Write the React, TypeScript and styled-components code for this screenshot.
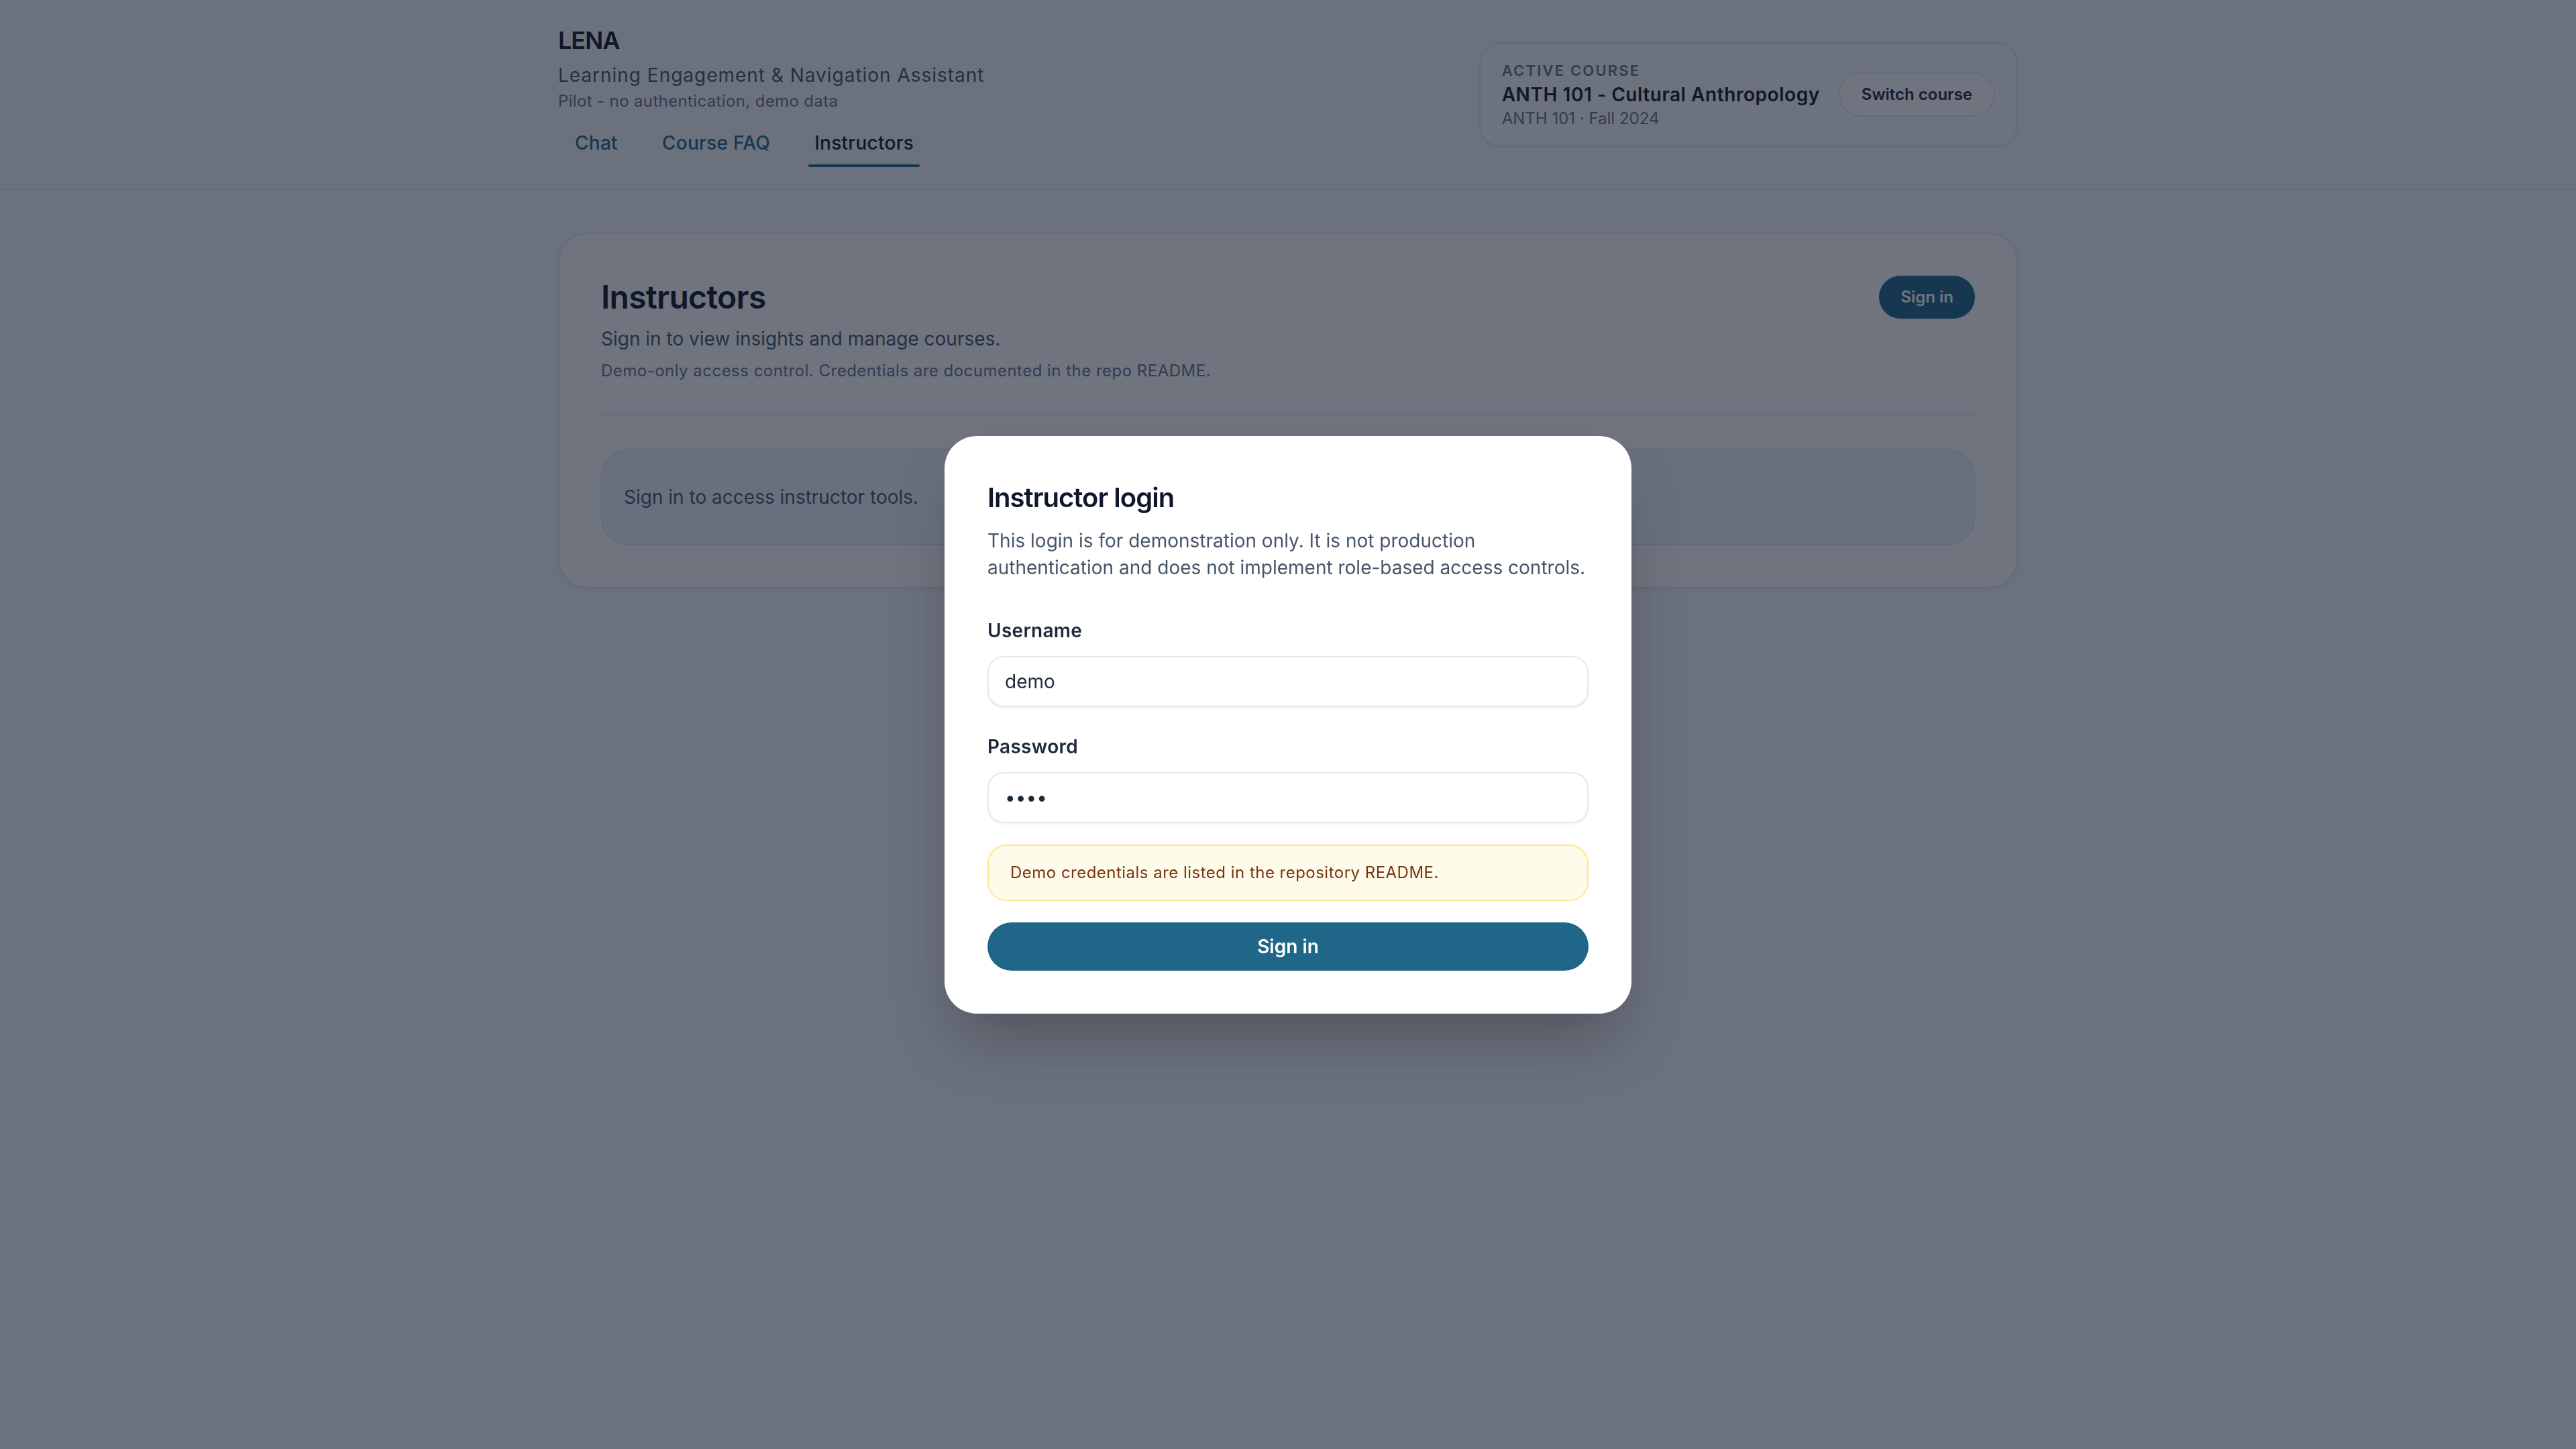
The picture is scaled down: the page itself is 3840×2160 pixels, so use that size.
import React from "react";
import styled, { createGlobalStyle } from "styled-components";

const GlobalStyle = createGlobalStyle`
  * { box-sizing: border-box; }
  html, body { margin: 0; padding: 0; }
  body {
    font-family: Inter, "Noto Sans", "Liberation Sans", sans-serif;
    background: #f5f7fa;
    color: #0f172a;
    -webkit-font-smoothing: antialiased;
  }
`;

const brand = "#1f6688";

const Page = styled.div`
  min-height: 100vh;
  background: #f5f7fa;
`;

const Header = styled.header`
  background: #f7f9fb;
  border-bottom: 2px solid #e2e8f0;
`;

const HeaderInner = styled.div`
  max-width: 2304px;
  margin: 0 auto;
  padding: 32px 64px;
  display: flex;
  align-items: center;
  justify-content: space-between;
`;

const Brand = styled.div`
  display: flex;
  flex-direction: column;
`;

const Logo = styled.div`
  font-size: 36px;
  line-height: 56px;
  font-weight: 600;
  letter-spacing: -0.03em;
  color: #0f172a;
`;

const Subtitle = styled.div`
  margin-top: 4px;
  font-size: 28px;
  line-height: 40px;
  letter-spacing: 0.035em;
  color: #475569;
`;

const Tagline = styled.div`
  margin-top: 3px;
  font-size: 24px;
  line-height: 32px;
  letter-spacing: 0.015em;
  color: #64748b;
`;

const Nav = styled.nav`
  margin-top: 10px;
  display: flex;
  gap: 16px;
`;

const Tab = styled.button<{ $active?: boolean }>`
  position: relative;
  border: 0;
  background: transparent;
  padding: 16px 25px;
  font-family: inherit;
  font-size: 28px;
  line-height: 40px;
  font-weight: 500;
  letter-spacing: 0.01em;
  color: ${(p) => (p.$active ? "#0f172a" : brand)};
  cursor: pointer;
  &::after {
    content: "";
    display: ${(p) => (p.$active ? "block" : "none")};
    position: absolute;
    left: 16px;
    right: 16px;
    bottom: 0;
    height: 4px;
    border-radius: 4px;
    background: ${brand};
  }
`;

const CourseBox = styled.div`
  display: flex;
  align-items: center;
  gap: 28px;
  padding: 24px 32px;
  border: 2px solid #e2e8f0;
  border-radius: 32px;
  background: #f8fafc;
  box-shadow: 0 2px 4px rgba(15, 23, 42, 0.04);
`;

const CourseInfo = styled.div`
  display: flex;
  flex-direction: column;
`;

const Caption = styled.div`
  font-size: 22px;
  line-height: 32px;
  font-weight: 600;
  letter-spacing: 0.1em;
  text-transform: uppercase;
  color: #64748b;
`;

const CourseTitle = styled.div`
  font-size: 28px;
  line-height: 40px;
  font-weight: 600;
  letter-spacing: 0.02em;
  color: #0f172a;
`;

const CourseMeta = styled.div`
  font-size: 24px;
  line-height: 32px;
  color: #64748b;
`;

const GhostButton = styled.button`
  border: 2px solid #e2e8f0;
  background: #ffffff;
  border-radius: 999px;
  padding: 15px 32px;
  font-family: inherit;
  font-size: 24px;
  line-height: 32px;
  font-weight: 600;
  color: #1e293b;
  white-space: nowrap;
`;

const Main = styled.main`
  max-width: 2304px;
  margin: 0 auto;
  padding: 64px 64px;
`;

const Card = styled.section`
  background: #ffffff;
  border: 2px solid #e2e8f0;
  border-radius: 44px;
  padding: 62px;
  box-shadow: 0 2px 6px rgba(15, 23, 42, 0.06);
`;

const CardHead = styled.div`
  display: flex;
  align-items: flex-start;
  justify-content: space-between;
  padding-bottom: 48px;
  border-bottom: 2px solid #e2e8f0;
`;

const CardTitle = styled.h1`
  margin: 0;
  font-size: 48px;
  line-height: 64px;
  font-weight: 600;
  letter-spacing: -0.015em;
  color: #0f172a;
`;

const CardLead = styled.p`
  margin: 10px 0 0;
  font-size: 28px;
  line-height: 40px;
  color: #475569;
`;

const CardNote = styled.p`
  margin: 12px 0 0;
  font-size: 24px;
  line-height: 32px;
  letter-spacing: 0.02em;
  color: #64748b;
`;

const PillButton = styled.button`
  border: 0;
  background: ${brand};
  color: #ffffff;
  border-radius: 999px;
  padding: 16px 32px;
  font-family: inherit;
  font-size: 24px;
  line-height: 32px;
  font-weight: 600;
`;

const EmptyBox = styled.div`
  margin-top: 50px;
  padding: 50px 32px;
  border: 2px solid #e2e8f0;
  border-radius: 40px;
  background: #f1f5f9;
  font-size: 28px;
  line-height: 40px;
  color: #475569;
`;

const Overlay = styled.div`
  position: fixed;
  inset: 0;
  background: rgba(15, 23, 42, 0.6);
  display: flex;
  align-items: center;
  justify-content: center;
`;

const Dialog = styled.div`
  width: 1024px;
  background: #ffffff;
  border-radius: 48px;
  padding: 64px;
  box-shadow: 0 50px 100px -24px rgba(0, 0, 0, 0.3);
`;

const DialogTitle = styled.h2`
  margin: 0;
  font-size: 40px;
  line-height: 56px;
  font-weight: 600;
  letter-spacing: -0.025em;
  color: #0f172a;
`;

const DialogText = styled.p`
  margin: 16px 0 0;
  font-size: 28px;
  line-height: 40px;
  color: #475569;
`;

const Form = styled.form`
  margin-top: 54px;
  display: flex;
  flex-direction: column;
`;

const Field = styled.div<{ $gapAfter: number }>`
  display: flex;
  flex-direction: column;
  gap: 18px;
  margin-bottom: ${(p) => p.$gapAfter}px;
`;

const Label = styled.label`
  font-size: 28px;
  line-height: 40px;
  font-weight: 600;
  letter-spacing: 0.01em;
  color: #1e293b;
`;

const Input = styled.input`
  height: 76px;
  width: 100%;
  border: 2px solid #e2e8f0;
  border-radius: 24px;
  padding: 0 24px;
  font-family: inherit;
  font-size: 28px;
  color: #1e293b;
  background: #ffffff;
  box-shadow: 0 2px 3px rgba(15, 23, 42, 0.05);
  outline: none;
`;

const Notice = styled.div`
  padding: 24px 32px;
  border: 2px solid #fde68a;
  border-radius: 28px;
  background: #fffbeb;
  font-size: 24px;
  line-height: 32px;
  letter-spacing: 0.02em;
  color: #78350f;
`;

const SubmitButton = styled.button`
  margin-top: 32px;
  height: 72px;
  border: 0;
  border-radius: 999px;
  background: ${brand};
  color: #ffffff;
  font-family: inherit;
  font-size: 28px;
  font-weight: 600;
`;

export default function App() {
  return (
    <Page>
      <GlobalStyle />
      <Header>
        <HeaderInner>
          <Brand>
            <Logo>LENA</Logo>
            <Subtitle>Learning Engagement &amp; Navigation Assistant</Subtitle>
            <Tagline>Pilot - no authentication, demo data</Tagline>
            <Nav>
              <Tab>Chat</Tab>
              <Tab>Course FAQ</Tab>
              <Tab $active>Instructors</Tab>
            </Nav>
          </Brand>
          <CourseBox>
            <CourseInfo>
              <Caption>Active course</Caption>
              <CourseTitle>ANTH 101 - Cultural Anthropology</CourseTitle>
              <CourseMeta>ANTH 101 · Fall 2024</CourseMeta>
            </CourseInfo>
            <GhostButton>Switch course</GhostButton>
          </CourseBox>
        </HeaderInner>
      </Header>
      <Main>
        <Card>
          <CardHead>
            <div>
              <CardTitle>Instructors</CardTitle>
              <CardLead>Sign in to view insights and manage courses.</CardLead>
              <CardNote>
                Demo-only access control. Credentials are documented in the repo README.
              </CardNote>
            </div>
            <PillButton>Sign in</PillButton>
          </CardHead>
          <EmptyBox>Sign in to access instructor tools.</EmptyBox>
        </Card>
      </Main>
      <Overlay>
        <Dialog>
          <DialogTitle>Instructor login</DialogTitle>
          <DialogText>
            This login is for demonstration only. It is not production authentication and does
            not implement role-based access controls.
          </DialogText>
          <Form onSubmit={(e) => e.preventDefault()}>
            <Field $gapAfter={39}>
              <Label htmlFor="username">Username</Label>
              <Input id="username" type="text" defaultValue="demo" readOnly />
            </Field>
            <Field $gapAfter={32}>
              <Label htmlFor="password">Password</Label>
              <Input id="password" type="password" defaultValue="demo" readOnly />
            </Field>
            <Notice>Demo credentials are listed in the repository README.</Notice>
            <SubmitButton type="submit">Sign in</SubmitButton>
          </Form>
        </Dialog>
      </Overlay>
    </Page>
  );
}
